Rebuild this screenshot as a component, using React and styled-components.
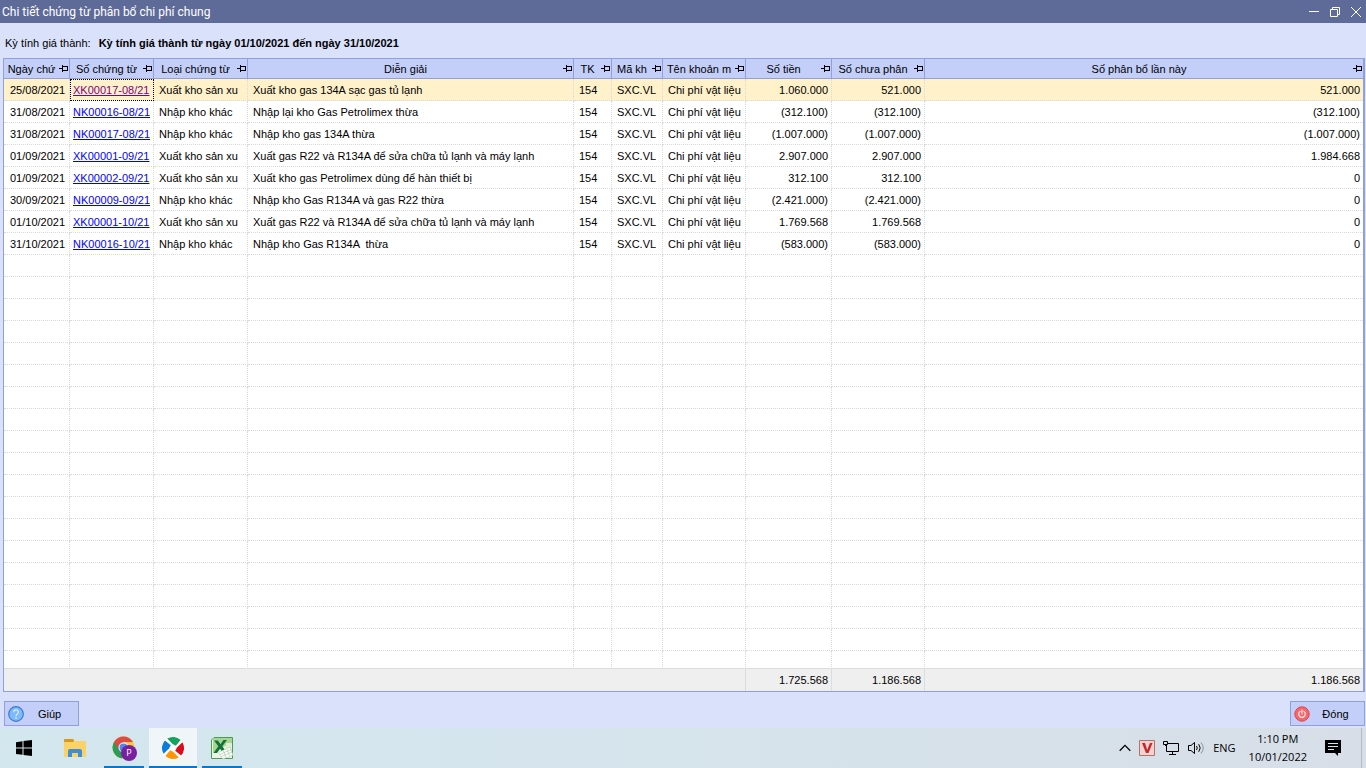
import React from "react";
import styled, { createGlobalStyle, css } from "styled-components";

const columns = [
  { key: "date", label: "Ngày chứ", width: 66, align: "center" },
  { key: "number", label: "Số chứng từ", width: 84 },
  { key: "type", label: "Loại chứng từ", width: 94 },
  { key: "note", label: "Diễn giải", width: 326 },
  { key: "account", label: "TK", width: 38 },
  { key: "costCode", label: "Mã kh", width: 51 },
  { key: "costName", label: "Tên khoản m", width: 83 },
  { key: "amount", label: "Số tiền", width: 86, align: "right" },
  { key: "remaining", label: "Số chưa phân", width: 93, align: "right" },
  { key: "allocated", label: "Số phân bổ lần này", align: "right" },
];

const makeRow = (date, number, type, note, amount, remaining, allocated) => ({
  date,
  number,
  type,
  note,
  account: "154",
  costCode: "SXC.VL",
  costName: "Chi phí vật liệu",
  amount,
  remaining,
  allocated,
});

const rows = [
  makeRow("25/08/2021", "XK00017-08/21", "Xuất kho sản xu", "Xuất kho gas 134A sạc gas tủ lạnh", "1.060.000", "521.000", "521.000"),
  makeRow("31/08/2021", "NK00016-08/21", "Nhập kho khác", "Nhập lại kho Gas Petrolimex thừa", "(312.100)", "(312.100)", "(312.100)"),
  makeRow("31/08/2021", "NK00017-08/21", "Nhập kho khác", "Nhập kho gas 134A thừa", "(1.007.000)", "(1.007.000)", "(1.007.000)"),
  makeRow("01/09/2021", "XK00001-09/21", "Xuất kho sản xu", "Xuất gas R22 và R134A để sửa chữa tủ lạnh và máy lạnh", "2.907.000", "2.907.000", "1.984.668"),
  makeRow("01/09/2021", "XK00002-09/21", "Xuất kho sản xu", "Xuất kho gas Petrolimex dùng để hàn thiết bị", "312.100", "312.100", "0"),
  makeRow("30/09/2021", "NK00009-09/21", "Nhập kho khác", "Nhập kho Gas R134A và gas R22 thừa", "(2.421.000)", "(2.421.000)", "0"),
  makeRow("01/10/2021", "XK00001-10/21", "Xuất kho sản xu", "Xuất gas R22 và R134A để sửa chữa tủ lạnh và máy lạnh", "1.769.568", "1.769.568", "0"),
  makeRow("31/10/2021", "NK00016-10/21", "Nhập kho khác", "Nhập kho Gas R134A  thừa", "(583.000)", "(583.000)", "0"),
];

const totals = { amount: "1.725.568", remaining: "1.186.568", allocated: "1.186.568" };

const emptyRows = Array.from({ length: 19 }, (_, i) => i);

const Pin = () => (
  <PinSvg viewBox="0 0 10 8" aria-hidden="true">
    <path d="M0 3h3v1H0zM3 0h1v7H3zM4 1h5v1H4zM8 1h1v5H8zM4 5h5v1H4z" fill="#000" />
  </PinSvg>
);

const HelpIcon = () => (
  <svg width="16" height="16" viewBox="0 0 16 16" aria-hidden="true">
    <circle cx="8" cy="8" r="7.3" fill="#7fb9fb" stroke="#3b7ccb" strokeWidth="1.2" />
    <path d="M5.7 6.2a2.3 2.3 0 1 1 3.5 1.9c-.8.5-1.2.8-1.2 1.8" fill="none" stroke="#e8f3ff" strokeWidth="1.1" />
    <circle cx="8" cy="11.9" r=".8" fill="#e8f3ff" />
  </svg>
);

const PowerIcon = () => (
  <svg width="16" height="16" viewBox="0 0 16 16" aria-hidden="true">
    <circle cx="8" cy="8" r="7.2" fill="#f8666c" stroke="#d8474f" strokeWidth="1" />
    <path d="M6 5.4a3.3 3.3 0 1 0 4 0M8 3.8v4" fill="none" stroke="#ffe9e9" strokeWidth="1.2" strokeLinecap="round" />
  </svg>
);

const WindowsIcon = () => (
  <svg width="16" height="16" viewBox="0 0 16 16" aria-hidden="true">
    <path d="M0 2.2L6.5 1.3V7.5H0zM7.5 1.1L16 0V7.5H7.5zM0 8.5H6.5V14.8L0 13.9zM7.5 8.5H16V16L7.5 14.9z" fill="#000" />
  </svg>
);

const FolderIcon = () => (
  <svg width="22" height="20" viewBox="0 0 22 20" aria-hidden="true">
    <path d="M0 5V1.500Q0 1 .7 1H9l1 1V5z" fill="#d99a16" />
    <path d="M0 4h9l1.800-1H21q1 0 1 1V18q0 1-1 1H1q-1 0-1-1z" fill="#fdd264" />
    <path d="M4 19v-6q0-2 2-2h10q2 0 2 2v6h-4v-4H8v4z" fill="#3e8fd8" />
  </svg>
);

const ChromeIcon = () => (
  <svg width="26" height="26" viewBox="0 0 26 26" aria-hidden="true">
    <circle cx="12.500" cy="12.500" r="11" fill="#f9c939" />
    <path d="M3 7a11 11 0 0 0 8 16.400l5-8-3.500-3z" fill="#2a9d55" />
    <path d="M3 7A11 11 0 0 1 22 7H12.500L8 15z" fill="#db4c43" />
    <circle cx="12.500" cy="12.500" r="5" fill="#f4f8fa" />
    <circle cx="12.500" cy="12.500" r="4" fill="#4a8af0" />
    <circle cx="18" cy="18" r="8" fill="#7a1fa2" />
    <text x="18" y="21" fontSize="9" textAnchor="middle" fill="#fff" fontFamily="Open Sans, sans-serif">P</text>
  </svg>
);

const blades = ["#12a35c", "#d90d1e", "#ff9500", "#0a7bdc"];

const PinwheelIcon = () => (
  <svg width="24" height="24" viewBox="0 0 24 24" aria-hidden="true">
    <circle cx="12" cy="12" r="11.500" fill="#fff" />
    {blades.map((color, i) => (
      <path
        key={color}
        d="M6.200 2.600A11 11 0 0 1 19.600 4L14.800 9.800L11.600 8z"
        fill={color}
        transform={`rotate(${i * 90} 12 12)`}
      />
    ))}
  </svg>
);

const ExcelIcon = () => (
  <svg width="24" height="24" viewBox="0 0 24 24" aria-hidden="true">
    <path d="M4 1.500h18.500v21h-21V4z" fill="#eaf5e4" stroke="#4c9a55" />
    <path d="M4 2h18v5l-7 3L3 17V4z" fill="#a6d68f" />
    <path d="M16 7h5.500v6L16 15z" fill="#dcefd2" />
    <path d="M4 4.500h4l2.500 3.700L13.500 4H17l-4.700 6.200L17 17h-4.200l-2.700-4.200L7 17H3.500l4.800-6.700z" fill="#12743a" />
    <path d="M8.500 16.500L20 11l3 8-10 4z" fill="#fff" stroke="#a9cba6" strokeWidth=".6" />
    <path d="M10 18.500l11-5M11.500 20.500l10.500-4.500M13.500 15l2.500 6M17 13.200l2.500 6.500" stroke="#9cc39c" strokeWidth=".6" />
  </svg>
);

const ChevronIcon = () => (
  <svg width="12" height="8" viewBox="0 0 12 8" aria-hidden="true">
    <path d="M.7 6.700L6 1.400l5.300 5.300" fill="none" stroke="#000" strokeWidth="1.300" />
  </svg>
);

const UnikeyIcon = () => (
  <svg width="16" height="16" viewBox="0 0 16 16" aria-hidden="true">
    <path d="M.5.5h15v15H.5z" fill="#f3d3d0" stroke="#b5706c" />
    <path d="M3 3h3l2.200 7L11 3h2.500L9.500 13H7z" fill="#c8262b" />
  </svg>
);

const NetworkIcon = () => (
  <svg width="17" height="16" viewBox="0 0 17 16" aria-hidden="true">
    <path d="M5 3.500h10.500v8H3.500v-6M.5 1.500h4v3h-4zM2 5.500h2M9.500 11.500v3M6 14.500h7" fill="none" stroke="#000" />
  </svg>
);

const SpeakerIcon = () => (
  <svg width="17" height="14" viewBox="0 0 17 14" aria-hidden="true">
    <path d="M.5 4.500H3L6.500 1.500v11L3 9.500H.5z" fill="none" stroke="#000" />
    <path d="M8.500 5q1.500 2 0 4M10.700 3.200q3 3.800 0 7.600" fill="none" stroke="#000" />
    <path d="M13 1.500q4.500 5.500 0 11" fill="none" stroke="#8b939a" />
  </svg>
);

const MessageIcon = () => (
  <svg width="16" height="16" viewBox="0 0 16 16" aria-hidden="true">
    <path d="M0 0h16v13h-3v3l-3-3H0z" fill="#000" />
    <path d="M3 3.500h10M3 6.500h10M3 9.500h6" stroke="#dbe3ea" />
  </svg>
);

const App = () => {
  return (
    <Screen>
      <GlobalStyle />
      <TitleBar>
        <Title>Chi tiết chứng từ phân bổ chi phí chung</Title>
        <WindowButton aria-label="Minimize">
          <svg width="10" height="10" viewBox="0 0 10 10">
            <path d="M0 4.500h10" stroke="#fff" />
          </svg>
        </WindowButton>
        <WindowButton aria-label="Restore">
          <svg width="10" height="10" viewBox="0 0 10 10">
            <path d="M.5 2.500h7v7h-7zM2.500 2.500v-2h7v7h-2" fill="none" stroke="#fff" />
          </svg>
        </WindowButton>
        <WindowButton aria-label="Close">
          <svg width="10" height="10" viewBox="0 0 10 10">
            <path d="M0 0l10 10M10 0L0 10" stroke="#fff" />
          </svg>
        </WindowButton>
      </TitleBar>

      <Period>
        <span>Kỳ tính giá thành:</span>
        <strong>Kỳ tính giá thành từ ngày 01/10/2021 đến ngày 31/10/2021</strong>
      </Period>

      <GridFrame>
        <Table>
          <colgroup>
            {columns.map((col) => (
              <col key={col.key} width={col.width} />
            ))}
          </colgroup>
          <thead>
            <tr>
              {columns.map((col) => (
                <HeadCell key={col.key}>
                  <HeadInner>
                    <HeadLabel>{col.label}</HeadLabel>
                    <Pin />
                  </HeadInner>
                </HeadCell>
              ))}
            </tr>
          </thead>
          <tbody>
            {rows.map((row, index) => (
              <Row key={row.number} $selected={index === 0}>
                {columns.map((col) =>
                  col.key === "number" ? (
                    <LinkCell key={col.key} $focused={index === 0}>
                      <DocLink href="#" $visited={index === 0}>
                        {row.number}
                      </DocLink>
                    </LinkCell>
                  ) : (
                    <Cell key={col.key} $align={col.align}>
                      {row[col.key]}
                    </Cell>
                  )
                )}
              </Row>
            ))}
            {emptyRows.map((n) => (
              <Row key={n}>
                {columns.map((col) => (
                  <Cell key={col.key} />
                ))}
              </Row>
            ))}
          </tbody>
          <tfoot>
            <tr>
              <TotalCell colSpan={7} />
              <TotalCell>{totals.amount}</TotalCell>
              <TotalCell>{totals.remaining}</TotalCell>
              <TotalCell>{totals.allocated}</TotalCell>
            </tr>
          </tfoot>
        </Table>
      </GridFrame>

      <Actions>
        <ActionButton>
          <HelpIcon />
          <span>Giúp</span>
        </ActionButton>
        <ActionButton>
          <PowerIcon />
          <span>Đóng</span>
        </ActionButton>
      </Actions>

      <Taskbar>
        <StartButton aria-label="Start">
          <WindowsIcon />
        </StartButton>
        <TaskButton aria-label="File Explorer">
          <FolderIcon />
        </TaskButton>
        <TaskButton $running aria-label="Chrome">
          <ChromeIcon />
        </TaskButton>
        <TaskButton $running $active aria-label="MISA">
          <PinwheelIcon />
        </TaskButton>
        <TaskButton $running aria-label="Excel">
          <ExcelIcon />
        </TaskButton>
        <Tray>
          <ChevronIcon />
          <UnikeyIcon />
          <NetworkIcon />
          <SpeakerIcon />
          <span>ENG</span>
          <Clock>
            <span>1:10 PM</span>
            <span>10/01/2022</span>
          </Clock>
          <MessageIcon />
        </Tray>
      </Taskbar>
    </Screen>
  );
};

const GlobalStyle = createGlobalStyle`
  * {
    box-sizing: border-box;
  }
  body {
    margin: 0;
    font-family: "Liberation Sans", Arial, sans-serif;
    font-size: 11px;
    color: #000;
  }
  button {
    font: inherit;
    color: inherit;
    border: 0;
    padding: 0;
    background: none;
  }
  svg {
    display: block;
    flex: none;
  }
`;

const Screen = styled.div`
  display: flex;
  flex-direction: column;
  height: 100vh;
  background: #dae1fb;
`;

const TitleBar = styled.header`
  display: flex;
  align-items: center;
  height: 23px;
  padding: 0 5px 0 2px;
  gap: 11px;
  background: #5e6b99;
  color: #fff;
`;

const Title = styled.h1`
  flex: 1;
  margin: 0;
  font: 12px Roboto, sans-serif;
`;

const WindowButton = styled.button`
  width: 10px;
  height: 10px;
`;

const Period = styled.div`
  display: flex;
  align-items: center;
  gap: 8px;
  height: 35px;
  padding: 4px 5px 0;
`;

const GridFrame = styled.main`
  flex: 1;
  min-height: 0;
  margin: 0 1px 0 3px;
  overflow: hidden;
  border: 1px solid #8fa0da;
  border-right-width: 2px;
  background: #fff;
`;

const Table = styled.table`
  width: 100%;
  table-layout: fixed;
  border-collapse: separate;
  border-spacing: 0;
`;

const HeadCell = styled.th`
  height: 20px;
  padding: 0;
  font-weight: normal;
  background: #c3cff8;
  border-right: 1px solid #8fa0da;
  border-bottom: 1px solid #8fa0da;

  &:last-child {
    border-right: 0;
  }
`;

const HeadInner = styled.div`
  display: flex;
  align-items: center;
`;

const HeadLabel = styled.span`
  flex: 1;
  text-align: center;
  white-space: nowrap;
`;

const PinSvg = styled.svg`
  width: 10px;
  height: 8px;
  shape-rendering: crispEdges;
`;

const Row = styled.tr`
  background: ${(props) => (props.$selected ? "#fff1ca" : "#fff")};
`;

const Cell = styled.td`
  height: 22px;
  padding: 0 3px 0 5px;
  overflow: hidden;
  white-space: pre;
  text-align: ${(props) => props.$align || "left"};
  border-right: 1px dotted #d9d9d9;
  border-bottom: 1px dotted #d9d9d9;

  &:last-child {
    border-right: 0;
  }
`;

const LinkCell = styled(Cell)`
  padding: 0 3px;
  ${(props) =>
    props.$focused &&
    css`
      outline: 1px dotted #000;
      outline-offset: -1px;
    `}
`;

const DocLink = styled.a`
  color: ${(props) => (props.$visited ? "#800080" : "#0000ff")};
`;

const TotalCell = styled.td`
  position: sticky;
  bottom: 0;
  height: 23px;
  padding: 0 3px;
  text-align: right;
  background: #efefef;
  border-top: 1px solid #dcdcdc;
  border-right: 1px solid #dcdcdc;

  &:last-child {
    border-right: 0;
  }
`;

const Actions = styled.div`
  display: flex;
  justify-content: space-between;
  padding: 9px 1px 2px 4px;
`;

const ActionButton = styled.button`
  display: flex;
  align-items: center;
  width: 75px;
  height: 25px;
  padding: 0 3px;
  border: 1px solid #8fa0da;
  background: #c3cff8;

  span {
    flex: 1;
    text-align: center;
  }
`;

const Taskbar = styled.footer`
  display: flex;
  gap: 1px;
  height: 40px;
  margin-right: 4px;
  border-right: 1px solid #b3bcc5;
  background: linear-gradient(90deg, #d3e7ee, #d6e4ec 50%, #d7dee7);
  box-shadow: 4px 0 #d7dee7;
`;

const TaskButton = styled.button`
  display: flex;
  align-items: center;
  justify-content: center;
  width: 48px;
  background: ${(props) =>
    props.$running
      ? `linear-gradient(#0078d7, #0078d7) center bottom / ${props.$active ? 48 : 40}px 2px no-repeat`
      : "none"};
  background-color: ${(props) => (props.$active ? "#eff5f9" : "transparent")};
`;

const StartButton = styled(TaskButton)`
  margin-right: 2px;
`;

const Tray = styled.div`
  display: flex;
  align-items: center;
  gap: 8px;
  margin-left: auto;
  padding: 0 20px 1px 0;
  font: 11px "Open Sans", sans-serif;
`;

const Clock = styled.div`
  display: flex;
  flex-direction: column;
  align-items: center;
  margin: 0 10px 0 5px;
  line-height: 18px;
`;

export default App;
